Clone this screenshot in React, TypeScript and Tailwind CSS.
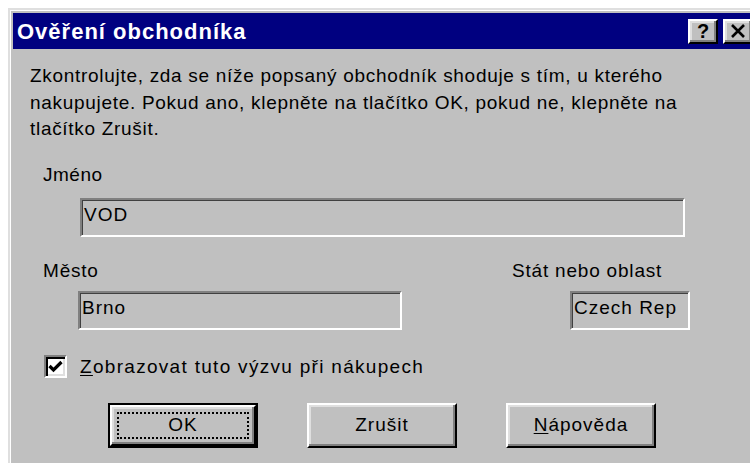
import React from 'react';

const font = { fontFamily: '"Liberation Sans", Arial, sans-serif' };

const raised =
  'border-2 border-t-white border-l-white border-b-black border-r-black bg-[#c0c0c0] shadow-[inset_-2px_-2px_0_#808080,inset_2px_2px_0_#dfdfdf]';

const sunken =
  'border-2 border-t-[#808080] border-l-[#808080] border-b-white border-r-white bg-[#c0c0c0] shadow-[inset_1px_1px_0_#404040]';

const Field: React.FC<{ value: string; className: string }> = ({ value, className }) => (
  <div className={`${sunken} h-[39px] flex items-center pl-[2px] pb-[3px] text-[19px] tracking-[1px] text-black ${className}`}>
    {value}
  </div>
);

const DialogButton: React.FC<{ children: React.ReactNode; isDefault?: boolean }> = ({ children, isDefault }) =>
  isDefault ? (
    <div className="w-[150px] h-[45px] border-2 border-black">
      <div className={`${raised} w-full h-full p-[5px]`}>
        <div className="w-full h-full border-2 border-dotted border-black flex items-center justify-center text-[19px] tracking-[1px] text-black">
          {children}
        </div>
      </div>
    </div>
  ) : (
    <div className={`${raised} w-[150px] h-[45px] flex items-center justify-center text-[19px] tracking-[1px] text-black`}>
      {children}
    </div>
  );

const App: React.FC = () => {
  return (
    <div className="w-[750px] h-[463px] bg-white overflow-hidden pl-[8px] pt-[8px]" style={font}>
      <div className="w-[760px] h-[470px] border-t-2 border-l-2 border-[#dfdfdf]">
        <div className="w-full h-full border-t border-l border-white bg-[#c0c0c0] p-[2px]">
          {/* title bar */}
          <div className="w-[741px] h-[36px] bg-[#000080] flex items-center justify-between pl-[4px] pr-[1px]">
            <span className="text-white font-bold text-[22px] tracking-[1px]">Ověření obchodníka</span>
            <div className="flex items-center gap-[5px]">
              <div className={`${raised} w-[30px] h-[25px] flex items-center justify-center text-[20px] font-bold leading-none text-black`}>?</div>
              <div className={`${raised} w-[30px] h-[25px] flex items-center justify-center`}>
                <svg width="16" height="14" viewBox="0 0 16 14">
                  <path d="M2 1 L14 13 M14 1 L2 13" stroke="#000" strokeWidth="2.6" />
                </svg>
              </div>
            </div>
          </div>

          {/* body */}
          <div className="flex flex-col pl-[17px] text-black text-[19px]">
            <p className="mt-[14px] leading-[26.5px] tracking-[0.7px]">
              Zkontrolujte, zda se níže popsaný obchodník shoduje s tím, u kterého
              <br />
              nakupujete. Pokud ano, klepněte na tlačítko OK, pokud ne, klepněte na
              <br />
              tlačítko Zrušit.
            </p>

            <div className="mt-[20px] ml-[13px] leading-[24px] tracking-[0.5px]">Jméno</div>
            <Field value="VOD" className="mt-[11px] ml-[50px] w-[605px] h-[38px]" />

            <div className="mt-[22px] flex leading-[24px] tracking-[0.8px]">
              <span className="w-[482px] pl-[13px]">Město</span>
              <span>Stát nebo oblast</span>
            </div>
            <div className="mt-[8px] flex">
              <Field value="Brno" className="ml-[48px] w-[324px]" />
              <Field value="Czech Rep" className="ml-[168px] w-[120px]" />
            </div>

            <div className="mt-[23px] ml-[14px] flex items-center gap-[13px]">
              <div className="w-[23px] h-[23px] border-2 border-t-[#808080] border-l-[#808080] border-b-white border-r-white shadow-[inset_2px_2px_0_#000,inset_-2px_-2px_0_#dfdfdf] bg-white flex items-center justify-center">
                <svg width="15" height="13" viewBox="0 0 15 13">
                  <path d="M1.5 6 L5.5 10 L13.5 2" stroke="#000" strokeWidth="3.2" fill="none" />
                </svg>
              </div>
              <span className="tracking-[1.3px]">
                <span className="underline underline-offset-2">Z</span>obrazovat tuto výzvu při nákupech
              </span>
            </div>

            <div className="mt-[22px] ml-[78px] flex gap-[49px]">
              <DialogButton isDefault>OK</DialogButton>
              <DialogButton>Zrušit</DialogButton>
              <DialogButton>
                <span>
                  <span className="underline underline-offset-2">N</span>ápověda
                </span>
              </DialogButton>
            </div>
          </div>
        </div>
      </div>
    </div>
  );
};

export default App;
